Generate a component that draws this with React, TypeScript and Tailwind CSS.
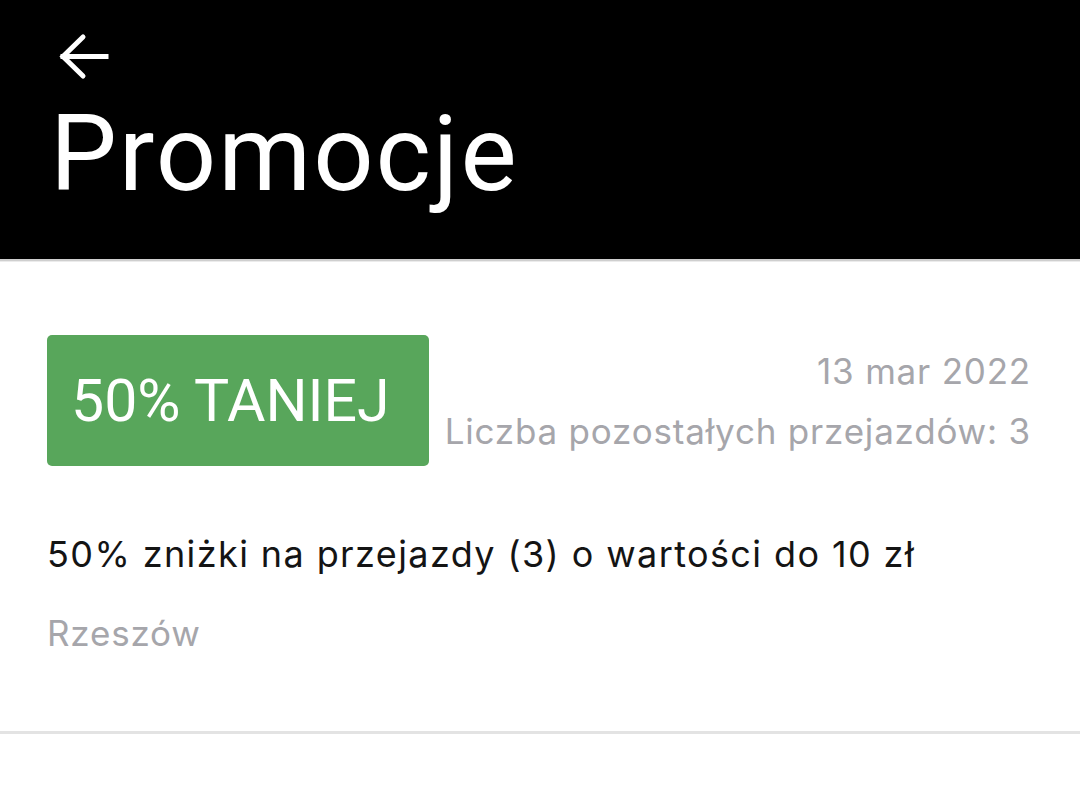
export default function App() {
  return (
    <div className="w-[1080px] h-[789px] bg-white overflow-hidden" style={{ fontFamily: "Roboto, 'Liberation Sans', sans-serif" }}>
      <div className="h-[259px] bg-black flex flex-col pt-[33px] pl-[50px]">
        <svg width="50" height="48" viewBox="0 0 50 48" className="ml-[9px] block" fill="none" stroke="white" strokeWidth="5" strokeLinecap="square">
          <path d="M4 23.5H47" />
          <path d="M24 4L4 23.5L24 43" strokeLinecap="round" />
        </svg>
        <div className="mt-[20px] text-[106px] leading-[106px] text-white tracking-[2px]">Promocje</div>
      </div>
      <div className="h-[2px] bg-[#cfcfcf]" />
      <div className="h-[1px] bg-[#ebebeb]" />
      <div className="pl-[47px] pr-[49px] pt-[73px]">
        <div className="flex items-center justify-between">
          <div className="h-[131px] w-[382px] rounded-[5px] bg-[#58a65b] flex items-center pl-[24px] text-white text-[59px] leading-none">
            50% TANIEJ
          </div>
          <div className="text-right text-[#a6a6ab] text-[35px] leading-[60px] tracking-[0.8px] font-['Inter',sans-serif]">
            <div>13 mar 2022</div>
            <div>Liczba pozostałych przejazdów: 3</div>
          </div>
        </div>
        <div className="mt-[68px] text-[36px] leading-[40px] tracking-[1.4px] text-[#141414] font-['Inter',sans-serif]">
          50% zniżki na przejazdy (3) o wartości do 10 zł
        </div>
        <div className="mt-[39px] text-[35px] leading-[40px] tracking-[0.8px] text-[#a6a6ab] font-['Inter',sans-serif]">Rzeszów</div>
      </div>
      <div className="mt-[78px] h-[3px] bg-[#e3e3e3]" />
    </div>
  );
}
